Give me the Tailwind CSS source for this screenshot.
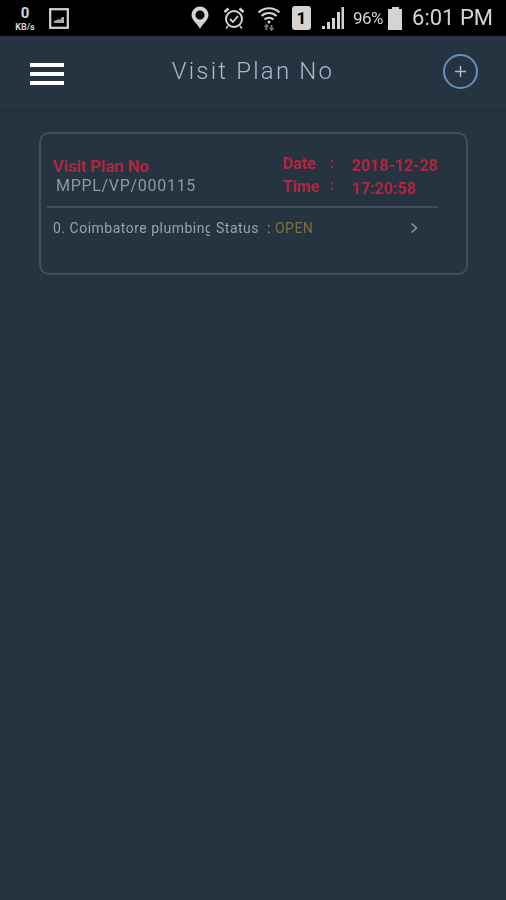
<!DOCTYPE html>
<html lang="en">
<head>
<meta charset="UTF-8">
<title>Visit Plan No</title>
<script src="https://cdn.jsdelivr.net/npm/@tailwindcss/browser@4"></script>
</head>
<body class="w-[506px] h-[900px] overflow-hidden bg-[#263340] font-['Roboto',sans-serif] blur-[0.4px]">

  <!-- status bar -->
  <div class="h-[36px] bg-black flex items-center justify-between pl-[12px] pr-[13px] text-[#d4d4d4]">
    <div class="flex items-center gap-[11px]">
      <div class="w-[26px] flex flex-col items-center leading-none">
        <span class="text-[15px] font-bold h-[18px] leading-[18px]">0</span>
        <span class="text-[9px] font-bold h-[11px] leading-[11px]">KB/s</span>
      </div>
      <svg width="20" height="21" viewBox="0 0 20 21">
        <rect x="1.200" y="1.200" width="17.600" height="18.600" fill="none" stroke="#d4d4d4" stroke-width="2.200"/>
        <path d="M5 15v-2l3-1 2-1 1 1 2-3 2 0v6z" fill="#a8a8a8"/>
      </svg>
    </div>
    <div class="flex items-center">
      <svg class="mr-[13px]" width="20" height="24" viewBox="0 0 20 24">
        <path fill-rule="evenodd" d="M10 23C8 18 1.500 14.500 1.500 9a8.500 8.500 0 0 1 17 0C18.500 14.500 12 18 10 23zM10 4.500a4.500 4.500 0 1 0 0 9 4.500 4.500 0 0 0 0-9z" fill="#d4d4d4"/>
      </svg>
      <svg class="mr-[12px]" width="22" height="24" viewBox="0 0 22 24" fill="none" stroke="#d4d4d4">
        <circle cx="11" cy="13" r="8" stroke-width="2"/>
        <path d="M7 13l3 3 5-6" stroke-width="1.800"/>
        <path d="M1.500 6l4-3.500M20.500 6l-4-3.500" stroke-width="2.500"/>
        <path d="M5 20l-2 2.500M17 20l2 2.500" stroke-width="1.500"/>
      </svg>
      <svg class="mr-[11px]" width="24" height="26" viewBox="0 0 24 26" fill="none" stroke="#d4d4d4">
        <path d="M1.500 7.500a15 15 0 0 1 21 0" stroke-width="2"/>
        <path d="M4.500 11a11 11 0 0 1 15 0" stroke-width="2"/>
        <path d="M7.500 14.500a6.500 6.500 0 0 1 9 0" stroke-width="2"/>
        <circle cx="12" cy="17" r="1.500" fill="#d4d4d4" stroke="none"/>
        <path d="M9.500 20v5M14.500 25v-5" stroke="#777" stroke-width="2"/>
        <path d="M7.500 22l2-2.500 2 2.500M12.500 23l2 2.500 2-2.500" stroke="#777" stroke-width="1.300"/>
      </svg>
      <div class="mr-[10px] w-[19px] h-[24px] bg-[#d4d4d4] rounded-[3px] flex items-center justify-center text-[17px] font-bold text-black leading-none">1</div>
      <svg class="mr-[8px]" width="24" height="24" viewBox="0 0 24 24" fill="#d4d4d4">
        <rect x="1" y="20" width="3" height="3"/>
        <rect x="6" y="16" width="3" height="7"/>
        <rect x="11" y="12" width="3" height="11"/>
        <rect x="16" y="6" width="3" height="17"/>
        <rect x="20.500" y="1" width="2.500" height="22"/>
      </svg>
      <span class="text-[17px] leading-none mr-[5px] tracking-[-0.5px]">96%</span>
      <div class="mr-[10px] flex flex-col items-center">
        <div class="w-[7px] h-[2px] bg-[#d4d4d4]"></div>
        <div class="w-[14px] h-[21px] bg-[#d4d4d4]"></div>
      </div>
      <span class="text-[22px] leading-none">6:01 PM</span>
    </div>
  </div>

  <!-- toolbar -->
  <div class="relative h-[74px] flex items-center justify-center pb-[4px] border-b border-[#222d38] shadow-[0_2px_3px_rgba(0,0,0,0.08)]">
    <button class="absolute left-[30px] top-[27px] w-[34px] flex flex-col gap-[5px]">
      <span class="h-[4px] bg-white"></span>
      <span class="h-[4px] bg-white"></span>
      <span class="h-[4px] bg-white"></span>
    </button>
    <h1 class="text-[24px] font-light tracking-[2.2px] text-[#a9b9c8] leading-none">Visit Plan No</h1>
    <div class="absolute left-[443px] top-[18px] w-[35px] h-[35px] rounded-full border-2 border-[#6491bf] flex items-center justify-center">
      <svg width="11" height="11" viewBox="0 0 11 11" stroke="#a3bcd6" stroke-width="1.500"><path d="M5.500 0v11M0 5.500h11"/></svg>
    </div>
  </div>

  <!-- card -->
  <div class="ml-[39px] mt-[22px] w-[429px] h-[143px] border-2 border-[#404f5d] rounded-[10px] pt-[20px] pl-[6px]">
    <div class="w-[391px] h-[54px] border-b-2 border-[#404f5d] flex">
      <div class="w-[236px] pl-[6px] pt-[2px]">
        <div class="text-[17px] font-bold leading-[20px] text-[#b3263f] tracking-[-0.2px]">Visit Plan No</div>
        <div class="text-[16px] leading-[20px] text-[#8d99a4] pl-[3px] tracking-[0.7px]">MPPL/VP/000115</div>
      </div>
      <div class="w-[47px] -mt-[2px] text-[16px] font-bold leading-[23px] text-[#b3263f]">
        <div>Date</div>
        <div>Time</div>
      </div>
      <div class="w-[22px] -mt-[2px] text-[14px] font-bold leading-[22px] text-[#b3263f]">
        <div>:</div>
        <div>:</div>
      </div>
      <div class="text-[16px] font-bold leading-[23px] text-[#b3263f]">
        <div>2018-12-28</div>
        <div>17:20:58</div>
      </div>
    </div>
    <div class="flex items-center h-[40px] text-[14px] text-[#98a3ad] tracking-[0.5px]">
      <span class="w-[157px] ml-[6px] overflow-hidden whitespace-nowrap">0. Coimbatore plumbing</span>
      <span class="ml-[6px]">Status</span>
      <span class="ml-[8px]">:</span>
      <span class="ml-[4px] text-[#7b7440]">OPEN</span>
      <svg class="ml-[97px]" width="8" height="12" viewBox="0 0 8 12" fill="none" stroke="#8d99a4" stroke-width="1.600"><path d="M1.500 1.500l5 4.500-5 4.500"/></svg>
    </div>
  </div>

</body>
</html>
